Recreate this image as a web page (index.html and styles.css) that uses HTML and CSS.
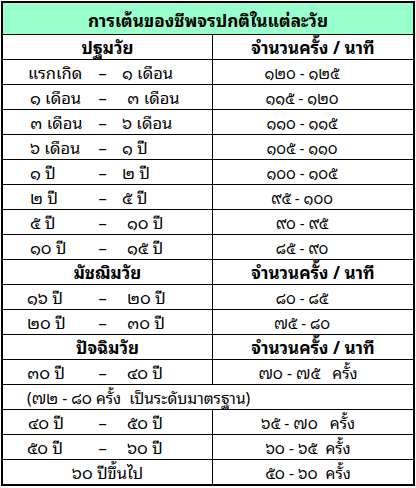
FILE: index.html
```html
<!DOCTYPE html>
<html lang="th">
<head>
<meta charset="utf-8">
<title>การเต้นของชีพจรปกติในแต่ละวัย</title>
<link rel="stylesheet" href="styles.css">
</head>
<body>
<div class="table">
  <div class="title">การเต้นของชีพจรปกติในแต่ละวัย</div>

  <div class="row head"><div class="c1">ปฐมวัย</div><div class="c2">จำนวนครั้ง / นาที</div></div>
  <div class="row"><div class="c1 span"><span class="from f28">แรกเกิด</span><span class="dash">–</span><span class="to">๑ เดือน</span></div><div class="c2 num">๑๒๐ - ๑๒๕</div></div>
  <div class="row"><div class="c1 span"><span class="from">๑ เดือน</span><span class="dash">–</span><span class="to t127">๓ เดือน</span></div><div class="c2 num">๑๑๕ - ๑๒๐</div></div>
  <div class="row"><div class="c1 span"><span class="from">๓ เดือน</span><span class="dash">–</span><span class="to">๖ เดือน</span></div><div class="c2 num">๑๑๐ - ๑๑๕</div></div>
  <div class="row"><div class="c1 span"><span class="from">๖ เดือน</span><span class="dash">–</span><span class="to">๑ ปี</span></div><div class="c2 num">๑๐๕ - ๑๑๐</div></div>
  <div class="row"><div class="c1 span"><span class="from">๑ ปี</span><span class="dash">–</span><span class="to">๒ ปี</span></div><div class="c2 num">๑๐๐ - ๑๐๕</div></div>
  <div class="row"><div class="c1 span"><span class="from">๒ ปี</span><span class="dash">–</span><span class="to">๕ ปี</span></div><div class="c2 num">๙๕ - ๑๐๐</div></div>
  <div class="row"><div class="c1 span"><span class="from">๕ ปี</span><span class="dash">–</span><span class="to t127">๑๐ ปี</span></div><div class="c2 num">๙๐ - ๙๕</div></div>
  <div class="row"><div class="c1 span"><span class="from">๑๐ ปี</span><span class="dash">–</span><span class="to t127">๑๕ ปี</span></div><div class="c2 num">๘๕ - ๙๐</div></div>

  <div class="row head"><div class="c1">มัชฌิมวัย</div><div class="c2">จำนวนครั้ง / นาที</div></div>
  <div class="row"><div class="c1 span"><span class="from f27">๑๖ ปี</span><span class="dash">–</span><span class="to t127">๒๐ ปี</span></div><div class="c2 num">๘๐ - ๘๕</div></div>
  <div class="row"><div class="c1 span"><span class="from f27">๒๐ ปี</span><span class="dash">–</span><span class="to t127">๓๐ ปี</span></div><div class="c2 num">๗๕ - ๘๐</div></div>

  <div class="row head"><div class="c1">ปัจฉิมวัย</div><div class="c2">จำนวนครั้ง / นาที</div></div>
  <div class="row"><div class="c1 span"><span class="from f27">๓๐ ปี</span><span class="dash">–</span><span class="to t127">๔๐ ปี</span></div><div class="c2 times">๗๐ - ๗๕&nbsp;&nbsp; ครั้ง</div></div>
  <div class="row note">(๗๒ - ๘๐ ครั้ง&nbsp; เป็นระดับมาตรฐาน)</div>
  <div class="row"><div class="c1 span"><span class="from f28">๔๐ ปี</span><span class="dash">–</span><span class="to t127">๕๐ ปี</span></div><div class="c2 times">๖๕ - ๗๐&nbsp;&nbsp; ครั้ง</div></div>
  <div class="row"><div class="c1 span"><span class="from f27">๕๐ ปี</span><span class="dash">–</span><span class="to t127">๖๐ ปี</span></div><div class="c2 times">๖๐ - ๖๕&nbsp; ครั้ง</div></div>
  <div class="row"><div class="c1">๖๐ ปีขึ้นไป</div><div class="c2 times">๕๐ - ๖๐&nbsp; ครั้ง</div></div>
</div>
</body>
</html>
```

FILE: styles.css
```css
html, body {
  margin: 0;
  padding: 0;
  background: #ffffff;
}

body {
  font-family: "Noto Sans Thai Looped", "Loma", "Tahoma", "Noto Sans Thai", "DejaVu Sans", sans-serif;
  color: #000000;
  font-size: 16.5px;
}

.table {
  box-sizing: border-box;
  width: 414px;
  margin: 1px 0 0 1px;
  border: 2px solid #000000;
}

.title {
  height: 31px;
  background: #99ffcc;
  display: flex;
  align-items: center;
  justify-content: center;
  font-weight: bold;
  font-size: 17.2px;
}

.row {
  display: grid;
  grid-template-columns: 209px 1fr;
  height: 24px;
  border-top: 1px solid #000000;
  line-height: 24px;
  overflow: hidden;
}

.c1, .c2 {
  display: flex;
  align-items: center;
  justify-content: center;
  white-space: pre;
}

.c2 {
  border-left: 1px solid #000000;
}

.head {
  font-weight: bold;
  font-size: 17px;
}

.c1.span {
  justify-content: flex-start;
}

.from {
  margin-left: 27px;
  width: 62px;
}

.from.f28 { margin-left: 25px; width: 64px; }
.from.f27 { margin-left: 24px; width: 65px; }

.dash {
  width: 21px;
  text-align: center;
}

.to { margin-left: 9px; }
.to.t127 { margin-left: 14px; }

.num {
  font-size: 15px;
  padding-right: 22px;
}

.times {
  font-size: 15.5px;
  padding-right: 10px;
}

.note {
  display: flex;
  align-items: center;
  padding-left: 24px;
  font-size: 15.5px;
}
```
